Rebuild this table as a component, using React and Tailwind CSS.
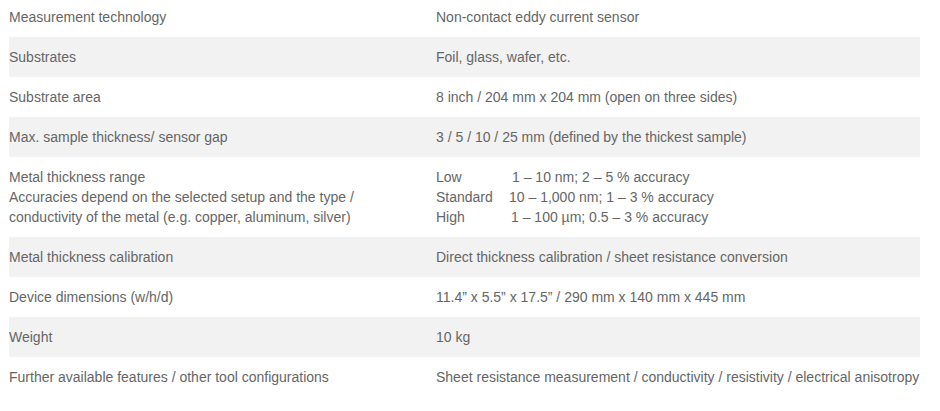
import React from 'react';

const rows = [
  ['Measurement technology', 'Non-contact eddy current sensor'],
  ['Substrates', 'Foil, glass, wafer, etc.'],
  ['Substrate area', '8 inch / 204 mm x 204 mm (open on three sides)'],
  ['Max. sample thickness/ sensor gap', '3 / 5 / 10 / 25 mm (defined by the thickest sample)'],
  ['metal', 'metal'],
  ['Metal thickness calibration', 'Direct thickness calibration / sheet resistance conversion'],
  ['Device dimensions (w/h/d)', '11.4” x 5.5” x 17.5” / 290 mm x 140 mm x 445 mm'],
  ['Weight', '10 kg'],
  ['Further available features / other tool configurations', 'Sheet resistance measurement / conductivity / resistivity / electrical anisotropy'],
];

// accuracy setups, value offset fine-tuned per line
const ranges = [
  { label: 'Low', value: '1 – 10 nm; 2 – 5 % accuracy', cls: 'ml-[3px]' },
  { label: 'Standard', value: '10 – 1,000 nm; 1 – 3 % accuracy', cls: 'ml-0' },
  { label: 'High', value: '1 – 100 µm; 0.5 – 3 % accuracy', cls: 'ml-[2px]' },
];

const MetalCells = () => (
  <>
    <div className="py-[10px]">
      <div>Metal thickness range</div>
      <div>Accuracies depend on the selected setup and the type /</div>
      <div>conductivity of the metal (e.g. copper, aluminum, silver)</div>
    </div>
    <div className="py-[10px]">
      {ranges.map((r) => (
        <div key={r.label} className="flex">
          <span className="w-[73px] shrink-0">{r.label}</span>
          <span className={r.cls}>{r.value}</span>
        </div>
      ))}
    </div>
  </>
);

export default function App() {
  return (
    <div className="w-[940px] h-[411px] overflow-hidden bg-white">
      <div
        className="ml-[9px] w-[911px] -mt-[3px] text-[14px] leading-[20px] text-[#666666]"
        style={{ fontFamily: '"Liberation Sans", Arial, sans-serif' }}
      >
        {rows.map(([label, value], i) => (
          <div
            key={i}
            className={`grid grid-cols-[427px_1fr] ${i % 2 === 1 ? 'bg-[#f2f2f2]' : 'bg-white'}`}
          >
            {label === 'metal' ? (
              <MetalCells />
            ) : (
              <>
                <div className="py-[10px] whitespace-nowrap">{label}</div>
                <div className="py-[10px] whitespace-nowrap">{value}</div>
              </>
            )}
          </div>
        ))}
      </div>
    </div>
  );
}
